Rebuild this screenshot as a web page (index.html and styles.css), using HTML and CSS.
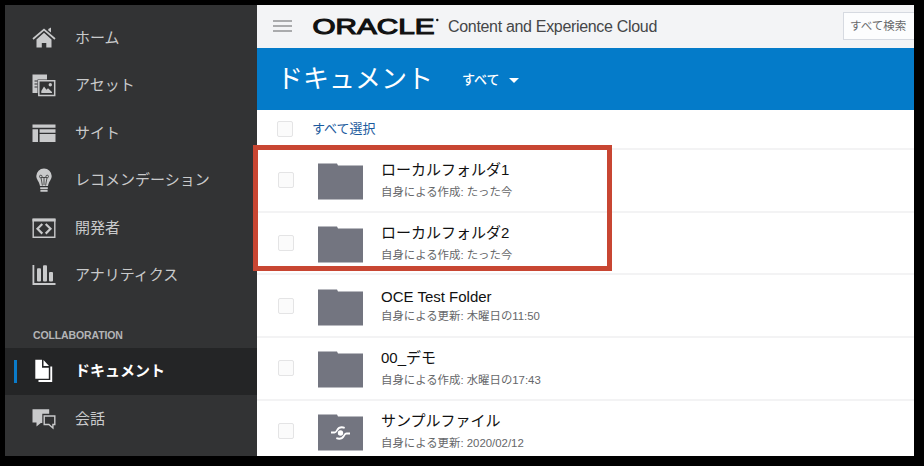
FILE: index.html
```html
<!DOCTYPE html>
<html lang="ja">
<head>
<meta charset="utf-8">
<title>ドキュメント</title>
<link rel="stylesheet" href="styles.css">
</head>
<body>
<div class="window">
  <nav class="sidebar">
    <a class="item"><svg class="icon" viewBox="0 0 24 24"><path d="M1 13 12 3.500 23 13" fill="none" stroke="currentColor" stroke-width="1.700"/><path d="M16.300 3 19 1.500V6.500L16.300 4.500zM4.500 13.500 12 6.800 19.500 13.500V21.500H14.300V17H9.800V21.500H4.500z"/></svg><span>ホーム</span></a>
    <a class="item"><svg class="icon" viewBox="0 0 24 24"><path d="M.5 1.500h14.500v5H5.500v13.500H.5z"/><path d="M2.500 8h3M2.500 11h3M2.500 14h3" stroke="#323334" stroke-width="1"/><path d="M6.800 7.800h15.900v14.700H6.800z" fill="#323334" stroke="currentColor" stroke-width="1.500"/><path d="M9.300 20v-2l2.700-4.500 2.500 3.300 1.500-1.500 4 3.600V20z"/><circle cx="18.300" cy="11.700" r="1.700"/></svg><span>アセット</span></a>
    <a class="item"><svg class="icon" viewBox="0 0 24 24"><path d="M.5 3.500h23v3.200H.5zM.5 8.200H6v12.800H.5zM7.600 8.200h15.900v3.600H7.600zM7.600 13h15.900v8H7.600z"/></svg><span>サイト</span></a>
    <a class="item"><svg class="icon" viewBox="0 0 24 24"><path d="M12 .5a7.600 7.600 0 0 0-7.700 7.600c0 3.600 3 5.600 3.700 10h8c.7-4.400 3.700-6.400 3.700-10A7.600 7.600 0 0 0 12 .5zM8.200 19.200h7.600v1.700H8.200zM8.400 21.700h7.200v2H8.400z"/><path d="M10.400 17.500 9 9.500M13.600 17.500 15 9.500M9.500 9.500h5M12 17V9" fill="none" stroke="#323334" stroke-width=".800"/><circle cx="8.800" cy="8.500" r="1.300" fill="none" stroke="#323334" stroke-width=".800"/><circle cx="15.200" cy="8.500" r="1.300" fill="none" stroke="#323334" stroke-width=".800"/></svg><span>レコメンデーション</span></a>
    <a class="item"><svg class="icon" viewBox="0 0 24 24"><path d="M1.200 3.500h21.600v17.800H1.200z" fill="none" stroke="currentColor" stroke-width="1.400"/><path d="M.5 2.500h23v3H.5z"/><path d="m10.300 8-4.800 4.800 4.800 4.800M13.700 8l4.800 4.800-4.800 4.800" fill="none" stroke="currentColor" stroke-width="2.200"/></svg><span>開発者</span></a>
    <a class="item"><svg class="icon" viewBox="0 0 24 24"><path d="M.5 2h1.800v18h21.200v2H.5z"/><rect x="5" y="5.200" width="4" height="13.300" rx="1"/><rect x="11" y="2.200" width="4" height="16.300" rx="1"/><rect x="17" y="9" width="4" height="9.500" rx="1"/></svg><span>アナリティクス</span></a>
    <h2 class="section">COLLABORATION</h2>
    <a class="item active"><svg class="icon" viewBox="0 0 24 24"><path d="M3.300.8h6.700v8h6.800v11H3.300zM11.500.9 17 7h-5.500z"/><path d="M18.300 7.500h1.900v15.400H6.500V21h11.800z"/></svg><span>ドキュメント</span></a>
    <a class="item"><svg class="icon" viewBox="0 0 24 24"><path d="M.5 2.200h16.700v4.500H10.300v9.200H8.800L4.500 19.500v-4H.5z"/><path d="M12.200 9h10.600v8.500h-1.900V21l-4-3.500h-4.700z" fill="none" stroke="currentColor" stroke-width="1.400"/></svg><span>会話</span></a>
  </nav>
  <main class="main">
    <header class="top">
      <svg class="burger" viewBox="0 0 19 12"><path d="M0 1h19M0 6h19M0 11h19"/></svg>
      <svg class="brand" viewBox="0 0 128 24"><text class="brand-name" x="-.5" y="19.800" textLength="122" lengthAdjust="spacingAndGlyphs">ORACLE</text><circle cx="124.300" cy="6" r="1.200"/></svg>
      <span class="product">Content and Experience Cloud</span>
      <div class="search">すべて検索</div>
    </header>
    <div class="titlebar"><h1>ドキュメント</h1><span class="filter">すべて</span><i class="caret"></i></div>
    <div class="select-all"><i class="check"></i><span>すべて選択</span></div>
    <div class="rows">
      <div class="highlight"></div>
      <div class="row"><i class="check"></i><svg class="folder" viewBox="0 0 45 37"><path d="M0 .5h19l1 2h25V36.500H0z"/></svg><div class="info"><div class="name">ローカルフォルダ1</div><div class="meta">自身による作成: たった今</div></div></div>
      <div class="row"><i class="check"></i><svg class="folder" viewBox="0 0 45 37"><path d="M0 .5h19l1 2h25V36.500H0z"/></svg><div class="info"><div class="name">ローカルフォルダ2</div><div class="meta">自身による作成: たった今</div></div></div>
      <div class="row latin"><i class="check"></i><svg class="folder" viewBox="0 0 45 37"><path d="M0 .5h19l1 2h25V36.500H0z"/></svg><div class="info"><div class="name">OCE Test Folder</div><div class="meta">自身による更新: 木曜日の11:50</div></div></div>
      <div class="row"><i class="check"></i><svg class="folder" viewBox="0 0 45 37"><path d="M0 .5h19l1 2h25V36.500H0z"/></svg><div class="info"><div class="name">00_デモ</div><div class="meta">自身による作成: 水曜日の17:43</div></div></div>
      <div class="row"><i class="check"></i><svg class="folder" viewBox="0 0 45 37"><path d="M0 .5h19l1 2h25V36.500H0z"/><circle class="dot" cx="22.500" cy="19" r="2.700"/><path class="share" d="M13 18.500h3.500c1.500 0 1.700-1 2.700-2.500 1.600-2.700 4.500-3.200 7.500-2.200M32 19.500h-3.500c-1.500 0-1.700 1-2.700 2.500-1.600 2.700-4.500 3.200-7.500 2.200"/></svg><div class="info"><div class="name">サンプルファイル</div><div class="meta">自身による更新: 2020/02/12</div></div></div>
    </div>
  </main>
</div>
</body>
</html>
```
FILE: styles.css
```css
* { box-sizing: border-box; }
body {
  margin: 0;
  height: 466px;
  padding: 5px 10px 10px 5px;
  background: #000;
  overflow: hidden;
  font-family: "Liberation Sans", "Noto Sans CJK JP", sans-serif;
}
.window { display: flex; height: 451px; overflow: hidden; background: #fff; }

.sidebar { width: 252px; flex: none; background: #323334; padding-top: 9px; }
.item {
  display: flex;
  align-items: center;
  height: 47.5px;
  padding-left: 27px;
  color: #c9cacb;
  font-size: 15px;
  line-height: 22px;
}
.item span { margin-left: 19px; }
.icon { width: 24px; height: 24px; fill: currentColor; flex: none; }
.section {
  margin: 0;
  height: 48.5px;
  padding: 30px 0 0 28px;
  font-size: 10.5px;
  letter-spacing: -0.12px;
  line-height: 12px;
  font-weight: bold;
  color: #b4b5b7;
}
.active { background: #242526; color: #fff; font-weight: bold; padding-left: 9px; }
.active::before { content: ""; width: 3px; height: 23px; margin-right: 15px; background: #0a7bc9; }
.active span { margin-top: -1px; }

.main { flex: 1; min-width: 0; background: #fff; }
.top { display: flex; align-items: center; height: 42.5px; background: #f3f4f6; padding-left: 16px; }
.burger { width: 19px; height: 12px; stroke: #929395; stroke-width: 1.7; fill: none; }
.brand { width: 128px; height: 24px; margin-left: 21px; fill: #111; overflow: visible; }
.brand-name { font-size: 21.5px; stroke: #111; stroke-width: 1.1; }
.product { margin: 2px 0 0 7px; width: 212px; font-size: 16px; letter-spacing: -0.32px; color: #454648; white-space: nowrap; }
.search {
  margin-left: auto;
  width: 71px;
  height: 28px;
  border: 1.5px solid #d6dae1;
  border-right: 0;
  background: #fcfdfe;
  padding-left: 6px;
  font-size: 11.5px;
  line-height: 26px;
  color: #68696b;
  white-space: nowrap;
}
.titlebar { display: flex; align-items: center; height: 62.5px; padding-left: 20px; background: #047bc9; color: #fff; }
h1 { margin: 0; font-size: 26px; line-height: 36px; font-weight: 400; }
.filter { margin: -1px 0 0 29px; font-size: 13px; font-weight: 500; }
.caret { margin: 3px 0 0 9px; border: 5px solid transparent; border-top-color: #fff; border-bottom: 0; }
.select-all { display: flex; align-items: center; height: 38px; padding-left: 20px; font-size: 13px; color: #1b5a9d; }
.select-all span { margin: -3px 0 0 19px; }
.check { width: 16px; height: 16px; flex: none; border: 1px solid #e4e4e5; border-radius: 2px; background: #fbfbfb; }
.rows { position: relative; }
.row { display: flex; align-items: center; height: 62.7px; border-top: 2px solid #f3f3f4; padding-left: 21px; }
.folder { width: 45px; height: 37px; margin: 3px 0 0 24px; fill: #737580; flex: none; }
.dot { fill: #fff; }
.share { fill: none; stroke: #fff; stroke-width: 1.8; }
.info { margin: 0 0 0 18px; white-space: nowrap; }
.name { font-size: 15px; line-height: 22px; color: #111; }
.meta { font-size: 11.4px; line-height: 17px; margin-top: 3px; color: #66676a; }
.latin .meta { margin-top: 0; }
.highlight { position: absolute; left: -4px; top: -3px; width: 359px; height: 126px; border: 5px solid #c84632; }
```
